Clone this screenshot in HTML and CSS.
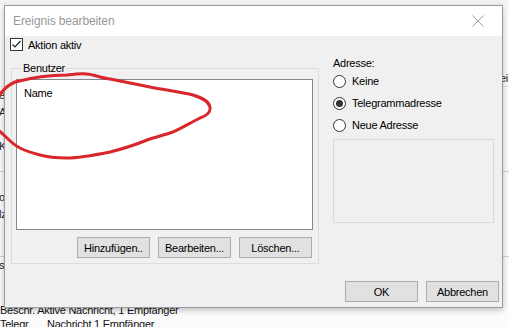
FILE: index.html
```html
<!DOCTYPE html>
<html lang="de">
<head>
<meta charset="utf-8">
<title>Ereignis bearbeiten</title>
<link rel="stylesheet" href="styles.css">
</head>
<body>
<div class="desk">
  <div class="bg">
    <div class="bg-top"></div>
    <div class="bg-head"><span class="frag"></span><span class="frag-r">ei</span></div>
    <div class="bg-list">
      <div class="bg-row"><span class="frag">e</span></div>
      <div class="bg-row"><span class="frag">A</span></div>
      <div class="bg-row"></div>
      <div class="bg-row"><span class="frag">K</span></div>
      <div class="bg-row line"></div>
      <div class="bg-row"></div>
      <div class="bg-row"><span class="frag">or</span></div>
      <div class="bg-row"><span class="frag">lz</span></div>
      <div class="bg-row"></div>
      <div class="bg-row line"></div>
      <div class="bg-row"><span class="frag">sc</span></div>
      <div class="bg-row"></div>
    </div>
    <div class="bg-bottom">
      <div class="bg-text">Beschr. Aktive Nachricht, 1 Empfänger</div>
      <div class="bg-text"><span class="bg-col">Telegr.</span>Nachricht 1 Empfänger</div>
    </div>
  </div>

  <div class="dialog">
    <div class="titlebar">
      <span class="title">Ereignis bearbeiten</span>
      <svg class="close" width="12" height="12" viewBox="0 0 12 12"><path d="M0.5 0.5 L11.5 11.5 M11.5 0.5 L0.5 11.5" stroke="#9a9a9a" stroke-width="1" fill="none"/></svg>
    </div>
    <div class="body">
      <label class="check-row">
        <span class="checkbox"><svg width="11" height="11" viewBox="0 0 11 11"><path d="M1.5 5.5 L4 8 L9.5 2" stroke="#222" stroke-width="1.2" fill="none"/></svg></span>
        <span>Aktion aktiv</span>
      </label>
      <div class="main">
        <fieldset class="group">
          <legend class="legend">Benutzer</legend>
          <div class="listbox"><div class="list-item">Name</div></div>
          <div class="btn-row">
            <button class="btn">Hinzufügen..</button>
            <button class="btn">Bearbeiten...</button>
            <button class="btn">Löschen...</button>
          </div>
        </fieldset>
        <div class="side">
          <div class="side-label">Adresse:</div>
          <label class="radio-row"><span class="radio"></span><span>Keine</span></label>
          <label class="radio-row"><span class="radio on"></span><span>Telegrammadresse</span></label>
          <label class="radio-row"><span class="radio"></span><span>Neue Adresse</span></label>
          <div class="addr-box"></div>
        </div>
      </div>
      <div class="footer">
        <button class="btn">OK</button>
        <button class="btn">Abbrechen</button>
      </div>
    </div>
  </div>

  <svg class="ink" width="509" height="327" viewBox="0 0 509 327">
    <path d="M -4 100 C 2 90, 8 85, 15 82 C 30 78, 50 75, 67 75 C 75 74, 82 73, 87 74 C 95 75, 102 78, 110 79 C 125 82, 140 85, 150 87 C 165 90, 182 92, 193 95 C 202 98, 209 101, 210 107 C 211 112, 206 116, 200 118 C 190 123, 182 128, 173 132 C 165 135, 155 137, 147 140 C 135 145, 122 149, 110 152 C 95 155, 80 158, 67 158 C 55 158, 47 157, 40 155 C 32 153, 26 151, 20 148 C 14 145, 10 141, 7 138 C 4 135, 1 132, -4 128" stroke="#d8262c" stroke-width="3" fill="none" stroke-linecap="round" stroke-linejoin="round"/>
  </svg>
</div>
</body>
</html>
```
FILE: styles.css
```css
* { box-sizing: border-box; }
html, body { margin: 0; padding: 0; }
body {
  font-family: "Liberation Sans", Arial, sans-serif;
  font-size: 11px;
  letter-spacing: -0.25px;
  color: #000;
  background: #fff;
}
.desk {
  position: relative;
  width: 509px;
  height: 327px;
  overflow: hidden;
  background: #fbfbfb;
}
.bg { display: flex; flex-direction: column; }
.bg-top { height: 5px; background: #f4f4f4; }
.bg-head {
  display: flex;
  justify-content: space-between;
  height: 17px;
  margin-top: 65px;
  line-height: 17px;
  border-bottom: 1px solid #e4e4e4;
}
.bg-list { display: flex; flex-direction: column; }
.bg-row {
  height: 17px;
  line-height: 17px;
  display: flex;
  justify-content: space-between;
}
.bg-row.line { border-bottom: 1px solid #d0d0d0; }
.frag { margin-left: -1px; color: #222; }
.frag-r { color: #222; padding-right: 1px; }
.bg-bottom { display: flex; flex-direction: column; margin-top: 13px; }
.bg-text {
  height: 14px;
  line-height: 13px;
  white-space: nowrap;
  color: #111;
  display: flex;
}
.bg-col { width: 47px; }
.dialog {
  position: absolute;
  left: 4px;
  top: 5px;
  width: 499px;
  height: 303px;
  border: 1px solid #9c9c9c;
  background: #f0f0f0;
  box-shadow: 0 2px 6px rgba(0,0,0,0.25);
  display: flex;
  flex-direction: column;
}
.titlebar {
  height: 30px;
  flex: none;
  background: #fff;
  display: flex;
  align-items: center;
  justify-content: space-between;
  padding: 0 18px 0 8px;
}
.title {
  font-size: 12px;
  color: #999;
  letter-spacing: -0.1px;
}
.close { display: block; }
.body {
  flex: 1;
  display: flex;
  flex-direction: column;
  padding: 2px 3px 5px 0;
}
.check-row {
  display: flex;
  align-items: center;
  gap: 5px;
  margin-left: 5px;
  height: 13px;
}
.checkbox {
  width: 13px;
  height: 13px;
  border: 1px solid #333;
  background: #fff;
  display: flex;
  align-items: center;
  justify-content: center;
}
.checkbox svg { display: block; }
.main {
  display: flex;
  align-items: flex-start;
  margin-top: 6px;
  gap: 14px;
}
.group {
  margin: 5px 0 0 6px;
  width: 308px;
  border: 1px solid #dcdcdc;
  padding: 4px 5px 5px 4px;
  min-width: 0;
}
.legend {
  padding: 0 1px;
  margin-left: 6px;
  line-height: 13px;
  height: 13px;
}
.listbox {
  height: 151px;
  background: #fff;
  border: 1px solid #828790;
  padding: 7px 0 0 7px;
}
.list-item { line-height: 13px; }
.btn-row {
  display: flex;
  justify-content: flex-end;
  gap: 8px;
  margin-top: 7px;
  padding-right: 1px;
}
.btn {
  width: 73px;
  height: 21px;
  border: 1px solid #adadad;
  background: #e1e1e1;
  font-family: inherit;
  font-size: 11px;
  letter-spacing: -0.25px;
  color: #000;
  padding: 0;
  margin: 0;
}
.side {
  width: 161px;
  display: flex;
  flex-direction: column;
}
.side-label { line-height: 13px; height: 13px; }
.radio-row {
  display: flex;
  align-items: center;
  gap: 6px;
  height: 22px;
}
.radio {
  width: 13px;
  height: 13px;
  border: 1px solid #333;
  border-radius: 50%;
  background: #fff;
  display: flex;
  align-items: center;
  justify-content: center;
}
.radio.on::after {
  content: "";
  width: 7px;
  height: 7px;
  border-radius: 50%;
  background: #333;
}
.addr-box {
  margin-top: 3px;
  height: 84px;
  border: 1px solid #d9d9d9;
  background: #f0f0f0;
}
.footer {
  margin-top: auto;
  display: flex;
  justify-content: flex-end;
  gap: 8px;
}
.ink {
  position: absolute;
  left: 0;
  top: 0;
  pointer-events: none;
}
```
